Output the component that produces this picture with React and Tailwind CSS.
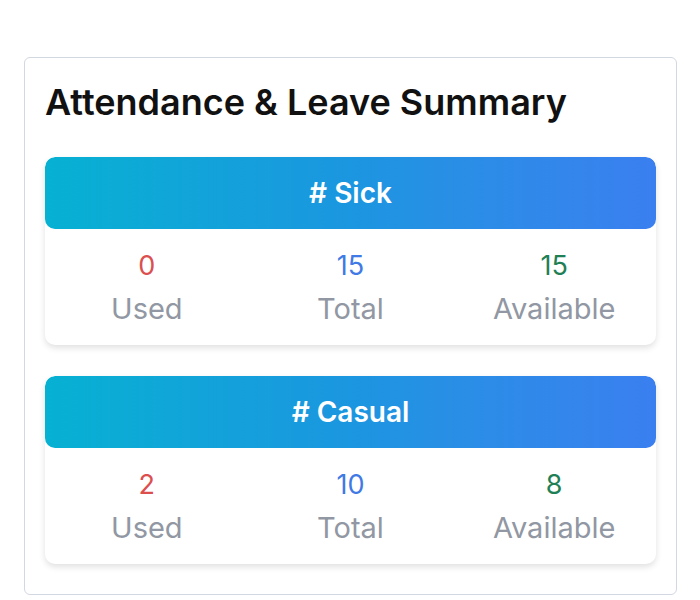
const leaves = [
  { type: "Sick", used: 0, total: 15, available: 15 },
  { type: "Casual", used: 2, total: 10, available: 8 },
];

function LeaveCard({ type, used, total, available }) {
  return (
    <div className="rounded-[10px] bg-white shadow-[0_3px_6px_rgba(0,0,0,0.12)] overflow-hidden">
      <div className="h-[72px] flex items-center justify-center bg-gradient-to-r from-[#06b1d2] via-[#1b96e0] to-[#3a7ff0] rounded-[10px]">
        <span className="text-white text-[28px] font-semibold"># {type}</span>
      </div>
      <div className="grid grid-cols-3 pt-[19px] pb-[18px] text-center">
        <div className="flex flex-col items-center gap-[7px]">
          <span className="text-[27px] leading-[36px] text-[#dc4f4f]">{used}</span>
          <span className="text-[29px] leading-[36px] text-[#9197a3]">Used</span>
        </div>
        <div className="flex flex-col items-center gap-[7px]">
          <span className="text-[27px] leading-[36px] text-[#3f7ae6]">{total}</span>
          <span className="text-[29px] leading-[36px] text-[#9197a3]">Total</span>
        </div>
        <div className="flex flex-col items-center gap-[7px]">
          <span className="text-[27px] leading-[36px] text-[#1f7f55]">{available}</span>
          <span className="text-[29px] leading-[36px] text-[#9197a3]">Available</span>
        </div>
      </div>
    </div>
  );
}

export default function App() {
  return (
    <div className="w-[700px] h-[600px] bg-white pt-[57px] pl-[24px] font-['Inter',sans-serif]">
      <div className="w-[653px] h-[538px] border border-[#d3d7e2] rounded-[6px] px-[20px] pt-[22px]">
        <h2 className="text-[36px] leading-[44px] font-semibold text-[#111]">
          Attendance &amp; Leave Summary
        </h2>
        <div className="mt-[33px] flex flex-col gap-[31px]">
          {leaves.map((l) => (
            <LeaveCard key={l.type} {...l} />
          ))}
        </div>
      </div>
    </div>
  );
}
